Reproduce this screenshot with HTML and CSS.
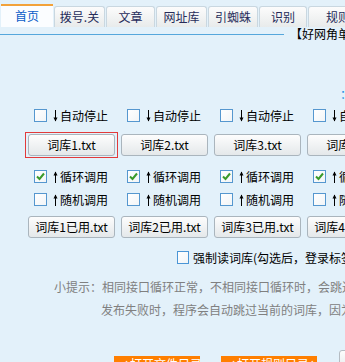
FILE: index.html
```html
<!DOCTYPE html>
<html lang="zh-CN">
<head>
<meta charset="UTF-8">
<title>词库设置</title>
<link rel="stylesheet" href="styles.css">
</head>
<body>
  <div class="page">
    <div class="tabs">
      <div class="tab active">首页</div>
      <div class="tab w51">拨号.关</div>
      <div class="tab w49">文章</div>
      <div class="tab w51">网址库</div>
      <div class="tab w50">引蜘蛛</div>
      <div class="tab w48">识别</div>
      <div class="tab w60">规则</div>
    </div>

    <div class="rule-row">
      <div class="rule"></div>
      <span class="notice">【好网角单词库发布器】</span>
    </div>

    <div class="note-row"><span class="note">：</span></div>

    <!-- 自动停止 -->
    <div class="grid check-row first">
      <label class="opt"><span class="box"></span><svg class="arrow" viewBox="0 0 5 12"><path d="M2.5 0V11" stroke="#000" stroke-width="1"/><path d="M0.5 7.5L2.5 11.5L4.5 7.5Z" fill="#000"/></svg>自动停止</label>
      <label class="opt"><span class="box"></span><svg class="arrow" viewBox="0 0 5 12"><path d="M2.5 0V11" stroke="#000" stroke-width="1"/><path d="M0.5 7.5L2.5 11.5L4.5 7.5Z" fill="#000"/></svg>自动停止</label>
      <label class="opt"><span class="box"></span><svg class="arrow" viewBox="0 0 5 12"><path d="M2.5 0V11" stroke="#000" stroke-width="1"/><path d="M0.5 7.5L2.5 11.5L4.5 7.5Z" fill="#000"/></svg>自动停止</label>
      <label class="opt"><span class="box"></span><svg class="arrow" viewBox="0 0 5 12"><path d="M2.5 0V11" stroke="#000" stroke-width="1"/><path d="M0.5 7.5L2.5 11.5L4.5 7.5Z" fill="#000"/></svg>自动停止</label>
    </div>

    <div class="grid btn-row files">
      <button class="btn focused">词库1.txt</button>
      <button class="btn">词库2.txt</button>
      <button class="btn">词库3.txt</button>
      <button class="btn">词库4.txt</button>
    </div>

    <!-- 循环调用 -->
    <div class="grid check-row loop">
      <label class="opt"><span class="box checked"><svg viewBox="0 0 11 11"><path d="M2 5.5L4.5 8L9 2.5" stroke="#3a9a2a" stroke-width="2" fill="none"/></svg></span><svg class="arrow" viewBox="0 0 5 12"><path d="M2.5 1V12" stroke="#000" stroke-width="1"/><path d="M0.5 4.5L2.5 0.5L4.5 4.5Z" fill="#000"/></svg>循环调用</label>
      <label class="opt"><span class="box checked"><svg viewBox="0 0 11 11"><path d="M2 5.5L4.5 8L9 2.5" stroke="#3a9a2a" stroke-width="2" fill="none"/></svg></span><svg class="arrow" viewBox="0 0 5 12"><path d="M2.5 1V12" stroke="#000" stroke-width="1"/><path d="M0.5 4.5L2.5 0.5L4.5 4.5Z" fill="#000"/></svg>循环调用</label>
      <label class="opt"><span class="box checked"><svg viewBox="0 0 11 11"><path d="M2 5.5L4.5 8L9 2.5" stroke="#3a9a2a" stroke-width="2" fill="none"/></svg></span><svg class="arrow" viewBox="0 0 5 12"><path d="M2.5 1V12" stroke="#000" stroke-width="1"/><path d="M0.5 4.5L2.5 0.5L4.5 4.5Z" fill="#000"/></svg>循环调用</label>
      <label class="opt"><span class="box checked"><svg viewBox="0 0 11 11"><path d="M2 5.5L4.5 8L9 2.5" stroke="#3a9a2a" stroke-width="2" fill="none"/></svg></span><svg class="arrow" viewBox="0 0 5 12"><path d="M2.5 1V12" stroke="#000" stroke-width="1"/><path d="M0.5 4.5L2.5 0.5L4.5 4.5Z" fill="#000"/></svg>循环调用</label>
    </div>

    <!-- 随机调用 -->
    <div class="grid check-row rand">
      <label class="opt"><span class="box"></span><svg class="arrow" viewBox="0 0 5 12"><path d="M2.5 1V12" stroke="#000" stroke-width="1"/><path d="M0.5 4.5L2.5 0.5L4.5 4.5Z" fill="#000"/></svg>随机调用</label>
      <label class="opt"><span class="box"></span><svg class="arrow" viewBox="0 0 5 12"><path d="M2.5 1V12" stroke="#000" stroke-width="1"/><path d="M0.5 4.5L2.5 0.5L4.5 4.5Z" fill="#000"/></svg>随机调用</label>
      <label class="opt"><span class="box"></span><svg class="arrow" viewBox="0 0 5 12"><path d="M2.5 1V12" stroke="#000" stroke-width="1"/><path d="M0.5 4.5L2.5 0.5L4.5 4.5Z" fill="#000"/></svg>随机调用</label>
      <label class="opt"><span class="box"></span><svg class="arrow" viewBox="0 0 5 12"><path d="M2.5 1V12" stroke="#000" stroke-width="1"/><path d="M0.5 4.5L2.5 0.5L4.5 4.5Z" fill="#000"/></svg>随机调用</label>
    </div>

    <div class="grid btn-row used">
      <button class="btn">词库1已用.txt</button>
      <button class="btn">词库2已用.txt</button>
      <button class="btn">词库3已用.txt</button>
      <button class="btn">词库4已用.txt</button>
    </div>

    <div class="force-row">
      <label class="opt"><span class="box big"></span>强制读词库(勾选后，登录标签页的词库设置无效)</label>
    </div>

    <div class="tips">
      <div class="tip-line"><span class="tip-head">小提示：</span>相同接口循环正常，不相同接口循环时，会跳过已用的词库</div>
      <div class="tip-line indent">发布失败时，程序会自动跳过当前的词库，因为词库已用完</div>
    </div>

    <div class="bottom-row">
      <span class="orange first-link">→打开文件目录←</span>
      <span class="orange second-link">→打开规则目录←</span>
      <button class="gray-btn">保存设置</button>
    </div>
  </div>
</body>
</html>
```

FILE: styles.css
```css
body {
  margin: 0;
  background: #e3f1fa;
  font-family: "Noto Sans CJK SC", "Noto Sans", sans-serif;
  font-size: 12px;
  color: #000;
  overflow: hidden;
}
.page {
  width: 640px;
  height: 362px;
  overflow: hidden;
}

/* tabs */
.tabs {
  display: flex;
  align-items: flex-end;
  gap: 1px;
  padding: 4px 0 0 1px;
  height: 23px;
}
.tab {
  flex-shrink: 0;
  box-sizing: border-box;
  height: 21px;
  line-height: 20px;
  text-align: center;
  color: #262c5a;
  border: 1px solid #c9d7e0;
  border-bottom: none;
  border-radius: 3px 3px 0 0;
  background: linear-gradient(#fcfcfc, #e8ebeb);
}
.tab.active {
  width: 52px;
  height: 23px;
  line-height: 20px;
  color: #0a5cc8;
  background: #fbfdff;
  border: none;
  border-top: 2px solid #f2a23a;
  border-radius: 0;
}
.w48 { width: 48px; }
.w49 { width: 49px; }
.w50 { width: 50px; }
.w51 { width: 51px; }
.w60 { width: 60px; }

.rule-row {
  display: flex;
  align-items: center;
  height: 14px;
  white-space: nowrap;
}
.rule {
  width: 284px;
  flex-shrink: 0;
  height: 1px;
  background: #55a7dc;
}
.notice {
  margin-left: 6px;
  line-height: 14px;
}
.note-row {
  margin-top: 44px;
  height: 14px;
  padding-left: 340px;
}
.note {
  color: #1a8fe3;
  line-height: 14px;
}

/* option grid */
.grid {
  display: grid;
  grid-template-columns: repeat(4, 87px);
  column-gap: 6px;
  padding-left: 28px;
}
.check-row { height: 13px; }
.first { margin-top: 10px; }
.files { margin-top: 12px; }
.loop { margin-top: 14px; }
.rand { margin-top: 10px; }
.used { margin-top: 10px; }

.opt {
  display: flex;
  align-items: center;
  height: 13px;
  line-height: 13px;
  white-space: nowrap;
  padding-left: 6px;
}
.box {
  box-sizing: border-box;
  width: 13px;
  height: 13px;
  flex-shrink: 0;
  border: 1px solid #5597cf;
  background: linear-gradient(135deg, #ffffff, #f2f5f7);
  display: flex;
  align-items: center;
  justify-content: center;
}
.box svg { width: 11px; height: 11px; }
.box.big { width: 12px; height: 13px; border-color: #4b96d6; }
.arrow {
  width: 5px;
  height: 12px;
  margin: 0 2px 0 6px;
  flex-shrink: 0;
}

.btn-row { height: 22px; }
.btn {
  box-sizing: border-box;
  height: 22px;
  padding: 0;
  font-family: "Noto Sans CJK SC", sans-serif;
  font-size: 12px;
  line-height: 20px;
  color: #000;
  border: 1px solid #aab5bd;
  border-radius: 3px;
  background: linear-gradient(#fdfdfd, #e4e8ea);
  white-space: nowrap;
}
.btn.focused {
  position: relative;
}
.btn.focused::after {
  content: "";
  position: absolute;
  top: -3px;
  left: -4px;
  right: -4px;
  bottom: -3px;
  border: 1px solid #e23a3a;
}

.force-row {
  margin-top: 13px;
  padding-left: 171px;
}
.force-row .opt .box { margin-right: 4px; }

.tips {
  margin-top: 11px;
  padding-left: 54px;
  color: #808080;
}
.tip-line {
  line-height: 23px;
  white-space: nowrap;
}
.indent { padding-left: 47px; }

.bottom-row {
  display: flex;
  align-items: flex-start;
  margin-top: 29px;
  padding-left: 114px;
}
.orange {
  flex-shrink: 0;
  box-sizing: border-box;
  overflow: hidden;
  margin-top: 6px;
  padding: 0 4px;
  background: #ff7f00;
  color: #fff;
  line-height: 16px;
  white-space: nowrap;
}
.first-link { width: 86px; margin-right: 21px; }
.second-link { width: 96px; margin-right: 22px; }
.gray-btn {
  flex-shrink: 0;
  width: 80px;
  height: 22px;
  font-family: "Noto Sans CJK SC", sans-serif;
  font-size: 12px;
  border: 1px solid #b5bcc2;
  border-radius: 3px;
  background: linear-gradient(#fdfdfd, #e4e8ea);
}
```
